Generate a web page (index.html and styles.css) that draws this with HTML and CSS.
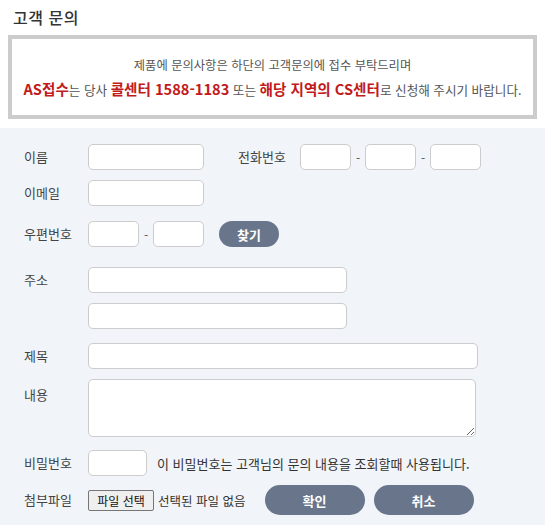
FILE: index.html
```html
<!DOCTYPE html>
<html lang="ko">
<head>
<meta charset="utf-8">
<title>고객 문의</title>
<link rel="stylesheet" href="styles.css">
</head>
<body>
<h2 class="title">고객 문의</h2>
<div class="notice">
  <p class="notice-line">제품에 문의사항은 하단의 고객문의에 접수 부탁드리며</p>
  <p class="notice-line line2"><strong class="red">AS접수</strong>는 당사 <strong class="red">콜센터 1588-1183</strong> 또는 <strong class="red">해당 지역의 CS센터</strong>로 신청해 주시기 바랍니다.</p>
</div>
<form class="form">
  <div class="row">
    <label class="label">이름</label>
    <input class="input w115" type="text">
    <label class="label phone-label">전화번호</label>
    <input class="input w50" type="text"><span class="dash">-</span><input class="input w50" type="text"><span class="dash">-</span><input class="input w50" type="text">
  </div>
  <div class="row">
    <label class="label">이메일</label>
    <input class="input w115" type="text">
  </div>
  <div class="row mt15">
    <label class="label">우편번호</label>
    <input class="input w50" type="text"><span class="dash">-</span><input class="input w50" type="text">
    <button type="button" class="btn btn-find">찾기</button>
  </div>
  <div class="row mt20">
    <label class="label">주소</label>
    <input class="input w258" type="text">
  </div>
  <div class="row">
    <span class="label"></span>
    <input class="input w258" type="text">
  </div>
  <div class="row mt14">
    <label class="label">제목</label>
    <input class="input w389" type="text">
  </div>
  <div class="row row-top">
    <label class="label label-top">내용</label>
    <textarea class="textarea"></textarea>
  </div>
  <div class="row mt13">
    <label class="label">비밀번호</label>
    <input class="input w58" type="password">
    <span class="hint">이 비밀번호는 고객님의 문의 내용을 조회할때 사용됩니다.</span>
  </div>
  <div class="row mt9">
    <label class="label">첨부파일</label>
    <span class="file-btn">파일 선택</span>
    <span class="file-text">선택된 파일 없음</span>
    <button type="button" class="btn btn-big btn-ok">확인</button>
    <button type="button" class="btn btn-big btn-cancel">취소</button>
  </div>
</form>
</body>
</html>
```
FILE: styles.css
```css
html, body {
  margin: 0;
  padding: 0;
  background: #ffffff;
}
body {
  font-family: "Noto Sans CJK KR", "Noto Sans", sans-serif;
  color: #333333;
  width: 545px;
}
.title {
  margin: 0;
  padding: 5px 13px 0;
  height: 30px;
  font-size: 16px;
  font-weight: 500;
  color: #333333;
  line-height: 24px;
  letter-spacing: 0.5px;
}
.notice {
  margin: 0 8px;
  border: 4px solid #cccccc;
  height: 76px;
  box-sizing: content-box;
  display: flex;
  flex-direction: column;
  align-items: center;
  justify-content: center;
  gap: 3px;
  padding: 0;
}
.notice-line {
  margin: 0;
  font-size: 12.3px;
  line-height: 20px;
  color: #555555;
  white-space: nowrap;
}
.notice-line:first-child {
  margin-top: 2px;
}
.line2 {
  font-size: 12.6px;
  line-height: 22px;
}
.red {
  color: #c21a1a;
  font-size: 14.6px;
  font-weight: 700;
}
.form {
  margin-top: 9px;
  background: #f1f4f8;
  padding: 16px 0 10px 24px;
  display: flex;
  flex-direction: column;
  gap: 10px;
}
.row {
  display: flex;
  align-items: center;
}
.row-top {
  align-items: flex-start;
}
.mt15 { margin-top: 5px; }
.mt20 { margin-top: 10px; }
.mt14 { margin-top: 4px; }
.mt13 { margin-top: 3px; }
.mt9 { margin-top: -1px; }
.label {
  width: 64px;
  flex: none;
  font-size: 13px;
  color: #444444;
  line-height: 18px;
}
.label-top {
  padding-top: 7px;
}
.phone-label {
  margin-left: 34px;
  width: 62px;
}
.input {
  box-sizing: border-box;
  height: 26px;
  border: 1px solid #cccccc;
  border-radius: 5px;
  background: #ffffff;
  padding: 0 6px;
  font-family: inherit;
  font-size: 13px;
  flex: none;
}
.w50 { width: 51px; }
.w58 { width: 59px; }
.w115 { width: 116px; }
.w258 { width: 259px; }
.w389 { width: 390px; }
.dash {
  width: 14px;
  text-align: center;
  font-size: 12px;
  color: #555555;
}
.textarea {
  box-sizing: border-box;
  width: 388px;
  height: 58px;
  border: 1px solid #cccccc;
  border-radius: 5px;
  background: #ffffff;
  margin: 0;
  font-family: inherit;
  flex: none;
}
.hint {
  margin-left: 10px;
  font-size: 13px;
  color: #333333;
}
.btn {
  border: none;
  background: #69758b;
  color: #ffffff;
  font-family: inherit;
  font-weight: 700;
  font-size: 13px;
  border-radius: 14px;
  cursor: pointer;
  padding: 0;
}
.btn-find {
  margin-left: 15px;
  width: 60px;
  height: 26px;
}
.btn-big {
  width: 100px;
  height: 30px;
  border-radius: 15px;
}
.btn-ok {
  margin-left: 19px;
}
.btn-cancel {
  margin-left: 9px;
}
.file-btn {
  box-sizing: border-box;
  height: 21px;
  width: 66px;
  border: 1px solid #767676;
  border-radius: 2px;
  background: #efefef;
  font-size: 12px;
  line-height: 19px;
  text-align: center;
  color: #111111;
}
.file-text {
  margin-left: 4px;
  font-size: 12.5px;
  color: #333333;
}
```
